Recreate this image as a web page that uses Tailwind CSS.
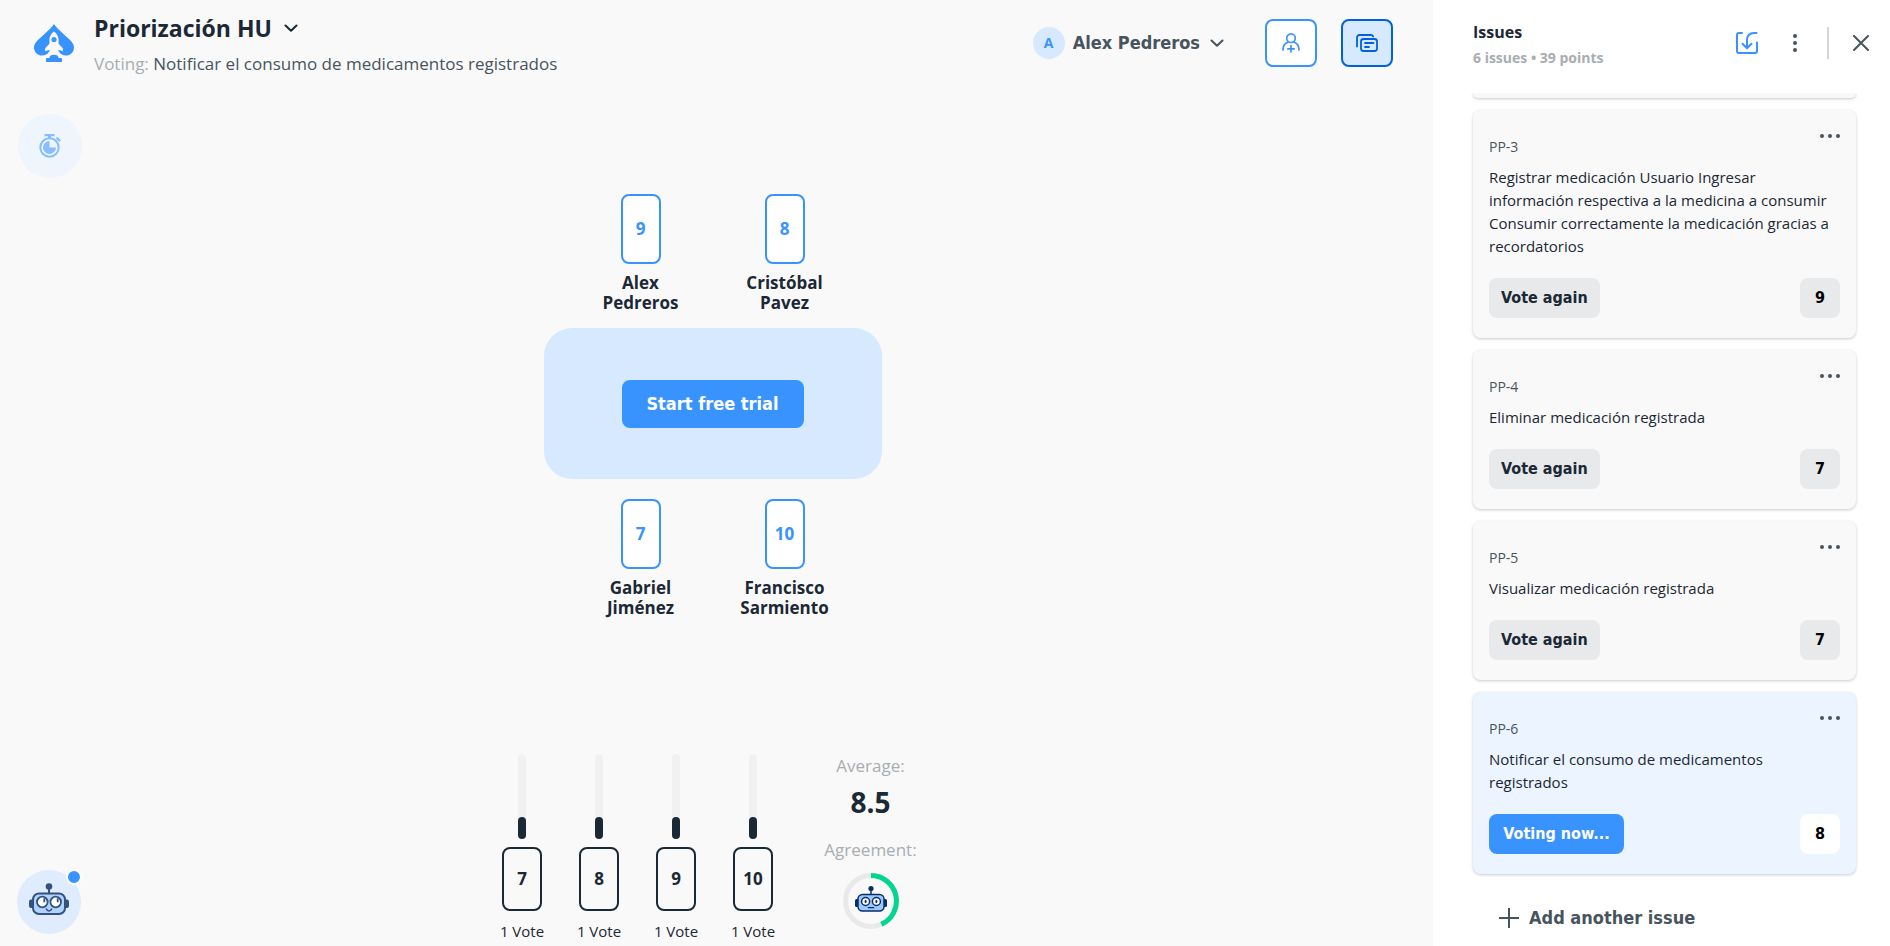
<!DOCTYPE html>
<html lang="es">
<head>
<meta charset="utf-8">
<meta name="viewport" content="width=device-width, initial-scale=1">
<title>Priorización HU</title>
<script src="https://cdn.jsdelivr.net/npm/@tailwindcss/browser@4"></script>
</head>
<body class="relative flex h-screen overflow-hidden bg-[#f9f9f9] font-['Open_Sans','Noto_Sans',sans-serif] text-[#1b2835]">

<svg class="hidden" aria-hidden="true">
  <symbol id="chevron" viewBox="0 0 14 8"><path d="M1.5 1.5 7 6.8l5.500-5.300" fill="none" stroke="currentColor" stroke-width="2" stroke-linecap="round" stroke-linejoin="round"/></symbol>
  <symbol id="dots" viewBox="0 0 20 4"><circle cx="2" cy="2" r="2"/><circle cx="10" cy="2" r="2"/><circle cx="18" cy="2" r="2"/></symbol>
</svg>

<main class="flex min-w-0 flex-1 flex-col">
  <header class="flex h-[86px] shrink-0 items-start pl-[34px] pr-10">
    <a href="#" aria-label="Inicio" class="mt-6 block">
      <svg class="h-[38px] w-10" viewBox="0 0 40 38">
        <path d="M20 0C17.500 4 12 8.500 7 13.200 3 16.800 0 19.600 0 23.400 0 28.200 3.800 31.500 8 31.500c3 0 5.600-1.200 7.200-3.500l4.800 2 4.800-2c1.600 2.300 4.200 3.500 7.200 3.500 4.200 0 8-3.300 8-8.100 0-3.800-3-6.600-7-10.200C28 8.500 22.500 4 20 0Z" fill="#3993ff"/>
        <path d="M20 7.500c-3.200 2.300-4.600 5.200-4.600 8.600v3.600l-3.800 4c-.7.800-.7 2.100-.3 3.500l2.600-.9 2.100-.1L13 31h14l-3-4.800 2.100.1 2.600.9c.4-1.400.4-2.700-.3-3.500l-3.800-4v-3.600c0-3.400-1.400-6.300-4.600-8.600Z" fill="#f9f9f9"/>
        <path d="M12.500 31 16 29h8l3.500 2v2.800h-15Z" fill="#f9f9f9"/>
        <circle cx="20" cy="15.500" r="2.600" fill="#3993ff"/>
        <path d="M15.500 34c0-2 1.500-3.200 4.500-3.200s4.500 1.200 4.500 3.200H27c.7 0 1 .6 1 1.400V38H12v-2.600c0-.8.3-1.400 1-1.400Z" fill="#3993ff"/>
      </svg>
    </a>
    <div class="ml-5 min-w-0">
      <button type="button" class="mt-3 flex h-8 items-center gap-3 text-[23px] font-bold">Priorización HU
        <svg class="h-2 w-3.5"><use href="#chevron"/></svg>
      </button>
      <p class="mt-2 truncate text-[17px] leading-6 text-[#48545d]"><span class="text-[#a8adb1]">Voting:</span> Notificar el consumo de medicamentos registrados</p>
    </div>
    <div class="ml-auto mt-[19px] flex shrink-0 items-center">
      <button type="button" class="mr-[41px] flex h-12 items-center text-[#48545d]">
        <span class="flex size-8 items-center justify-center rounded-full bg-[#d7e9ff] text-sm font-bold text-[#3993ff]">A</span>
        <span class="ml-2 font-['DejaVu_Sans_Condensed','Open_Sans',sans-serif] text-lg font-bold">Alex Pedreros</span>
        <svg class="ml-2.5 h-2 w-3.5"><use href="#chevron"/></svg>
      </button>
      <button type="button" aria-label="Invitar jugadores" class="flex h-12 w-[52px] items-center justify-center rounded-lg border-2 border-[#3993ff] bg-white text-[#3993ff]">
        <svg class="h-5 w-[18px]" viewBox="0 0 18 20" fill="none" stroke="currentColor" stroke-width="1.700" stroke-linecap="round"><circle cx="9" cy="5.200" r="4.300"/><path d="M1 17c0-3.800 1.800-6.600 4.800-7.700M17 17c0-3.800-1.800-6.600-4.800-7.700M9 12.500V19M5.800 15.800h6.400"/></svg>
      </button>
      <button type="button" aria-label="Issues" class="ml-6 flex h-12 w-[52px] items-center justify-center rounded-lg border-2 border-[#0060df] bg-[#d7e9ff] text-[#0060df]">
        <svg class="h-[18px] w-[22px]" viewBox="0 0 22 18" fill="none" stroke="currentColor" stroke-width="1.800" stroke-linecap="round" stroke-linejoin="round"><rect x="5" y="5" width="16" height="12" rx="2.500"/><path d="M1 12.500V3.500C1 2 2 1 3.500 1H15c1.200 0 1.800.5 2.200 1.500M9 9h8.500M9 13h4"/></svg>
      </button>
    </div>
  </header>

  <section aria-label="Mesa" class="flex flex-1 flex-col items-center justify-center pr-2">
    <ul class="flex">
      <li class="mx-6 flex w-24 flex-col items-center text-center">
        <span class="flex h-[70px] w-10 items-center justify-center rounded-lg border-2 border-[#3993ff] bg-white text-[17px] font-bold text-[#3993ff]">9</span>
        <span class="mt-[9px] text-[17px] font-bold leading-5">Alex Pedreros</span>
      </li>
      <li class="mx-6 flex w-24 flex-col items-center text-center">
        <span class="flex h-[70px] w-10 items-center justify-center rounded-lg border-2 border-[#3993ff] bg-white text-[17px] font-bold text-[#3993ff]">8</span>
        <span class="mt-[9px] text-[17px] font-bold leading-5">Cristóbal Pavez</span>
      </li>
    </ul>
    <div class="mt-[15px] flex h-[151px] w-[338px] items-center justify-center rounded-[28px] bg-[#d7e9ff]">
      <button type="button" class="h-12 w-[182px] rounded-lg bg-[#3993ff] font-['DejaVu_Sans_Condensed','Open_Sans',sans-serif] text-lg font-bold text-white">Start free trial</button>
    </div>
    <ul class="mt-5 flex">
      <li class="mx-6 flex w-24 flex-col items-center text-center">
        <span class="flex h-[70px] w-10 items-center justify-center rounded-lg border-2 border-[#3993ff] bg-white text-[17px] font-bold text-[#3993ff]">7</span>
        <span class="mt-[9px] text-[17px] font-bold leading-5">Gabriel Jiménez</span>
      </li>
      <li class="mx-6 flex w-24 flex-col items-center text-center">
        <span class="flex h-[70px] w-10 items-center justify-center rounded-lg border-2 border-[#3993ff] bg-white text-[17px] font-bold text-[#3993ff]">10</span>
        <span class="mt-[9px] text-[17px] font-bold leading-5">Francisco Sarmiento</span>
      </li>
    </ul>
  </section>

  <section aria-label="Resultados" class="flex h-[220px] shrink-0 justify-center pr-3">
    <ul class="mt-7 flex">
      <li class="flex w-[77px] flex-col items-center">
        <span class="flex h-[85px] w-2 items-end rounded-full bg-[#f1f1f1]"><span class="h-[22px] w-2 rounded-full bg-[#1b2835]"></span></span>
        <span class="mt-2 flex h-16 w-10 items-center justify-center rounded-lg border-2 border-[#1b2835] text-[17px] font-bold">7</span>
        <span class="mt-2.5 text-[15px] leading-5">1 Vote</span>
      </li>
      <li class="flex w-[77px] flex-col items-center">
        <span class="flex h-[85px] w-2 items-end rounded-full bg-[#f1f1f1]"><span class="h-[22px] w-2 rounded-full bg-[#1b2835]"></span></span>
        <span class="mt-2 flex h-16 w-10 items-center justify-center rounded-lg border-2 border-[#1b2835] text-[17px] font-bold">8</span>
        <span class="mt-2.5 text-[15px] leading-5">1 Vote</span>
      </li>
      <li class="flex w-[77px] flex-col items-center">
        <span class="flex h-[85px] w-2 items-end rounded-full bg-[#f1f1f1]"><span class="h-[22px] w-2 rounded-full bg-[#1b2835]"></span></span>
        <span class="mt-2 flex h-16 w-10 items-center justify-center rounded-lg border-2 border-[#1b2835] text-[17px] font-bold">9</span>
        <span class="mt-2.5 text-[15px] leading-5">1 Vote</span>
      </li>
      <li class="flex w-[77px] flex-col items-center">
        <span class="flex h-[85px] w-2 items-end rounded-full bg-[#f1f1f1]"><span class="h-[22px] w-2 rounded-full bg-[#1b2835]"></span></span>
        <span class="mt-2 flex h-16 w-10 items-center justify-center rounded-lg border-2 border-[#1b2835] text-[17px] font-bold">10</span>
        <span class="mt-2.5 text-[15px] leading-5">1 Vote</span>
      </li>
    </ul>
    <div class="ml-3 mt-7 flex w-[134px] flex-col items-center text-[17px] leading-6 text-[#a8adb1]">
      <span>Average:</span>
      <strong class="mt-1.5 text-[28px] font-bold leading-9 text-[#1b2835]">8.5</strong>
      <span class="mt-[18px]">Agreement:</span>
      <svg class="mt-[11px] size-14" viewBox="0 0 56 56" role="img" aria-label="Acuerdo 44%">
        <circle cx="28" cy="28" r="25.500" fill="none" stroke="#e8e9ea" stroke-width="5"/>
        <path d="M28 2.500a25.500 25.500 0 0 1 10.300 48.800" fill="none" stroke="#00d68f" stroke-width="5"/>
        <path d="M28 16v6" stroke="#0a2f66" stroke-width="1.500"/>
        <circle cx="28" cy="15.500" r="2.600" fill="#0a2f66"/>
        <rect x="12" y="26" width="4" height="8" rx="1.500" fill="#0a2f66"/><rect x="40" y="26" width="4" height="8" rx="1.500" fill="#0a2f66"/>
        <rect x="15" y="21.500" width="26" height="16.500" rx="4.500" fill="#9cc9ff" stroke="#0a2f66" stroke-width="1.500"/>
        <circle cx="22.600" cy="28.500" r="4" fill="#fff" stroke="#0a2f66" stroke-width="1.500"/><circle cx="33.400" cy="28.500" r="4" fill="#fff" stroke="#0a2f66" stroke-width="1.500"/>
        <ellipse cx="22.600" cy="28.500" rx="1" ry="1.700" fill="#0a2f66"/><ellipse cx="33.400" cy="28.500" rx="1" ry="1.700" fill="#0a2f66"/>
        <path d="M25.300 34.700h5.400" stroke="#0a2f66" stroke-width="1.300" stroke-linecap="round"/>
      </svg>
    </div>
  </section>
</main>

<aside aria-label="Issues" class="flex w-[457px] shrink-0 flex-col bg-white">
  <header class="flex h-[93px] shrink-0 pl-10 pr-[21px]">
    <div>
      <h2 class="mt-5 text-base font-bold leading-6">Issues</h2>
      <p class="mt-1 text-sm font-bold leading-5 text-[#a8adb1]">6 issues • 39 points</p>
    </div>
    <div class="ml-auto mt-[27px] flex h-8 items-center text-[#48545d]">
      <button type="button" aria-label="Importar issues" class="text-[#3993ff]">
        <svg class="size-[22px]" viewBox="0 0 22 22" fill="none" stroke="currentColor" stroke-width="2" stroke-linecap="round" stroke-linejoin="round"><path d="M6 1H3C1.800 1 1 1.800 1 3v16c0 1.200.8 2 2 2h16c1.200 0 2-.8 2-2v-8.500M20.500 1H18c-4.500 0-7 3-7 7.500V16M6.500 11.800 11 16.300l4.500-4.500"/></svg>
      </button>
      <button type="button" aria-label="Más opciones" class="ml-[35px]">
        <svg class="h-[18px] w-1" viewBox="0 0 4 18" fill="currentColor"><circle cx="2" cy="2" r="2"/><circle cx="2" cy="9" r="2"/><circle cx="2" cy="16" r="2"/></svg>
      </button>
      <span class="ml-[30px] h-8 w-0.5 bg-[#d3d6d8]"></span>
      <button type="button" aria-label="Cerrar" class="ml-6">
        <svg class="size-4" viewBox="0 0 16 16" fill="none" stroke="currentColor" stroke-width="2" stroke-linecap="round"><path d="m1 1 14 14M15 1 1 15"/></svg>
      </button>
    </div>
  </header>

  <div class="flex min-h-0 flex-1 flex-col gap-3 overflow-hidden pl-10 pr-[34px]">
    <div class="h-[5px] shrink-0 rounded-b-lg bg-[#f9f9f9] shadow-[0_1px_3px_rgba(27,40,53,0.250)]"></div>

    <article class="shrink-0 rounded-lg bg-[#f9f9f9] px-4 pb-5 shadow-[0_1px_3px_rgba(27,40,53,0.250)]">
      <div class="flex items-start justify-between pt-6">
        <span class="mt-[3px] text-[14px] leading-5 text-[#48545d]">PP-3</span>
        <button type="button" aria-label="Opciones de PP-3" class="h-1 text-[#48545d]"><svg class="h-1 w-5" fill="currentColor"><use href="#dots"/></svg></button>
      </div>
      <p class="mt-[9px] text-[15px] leading-[23px]">Registrar medicación Usuario Ingresar información respectiva a la medicina a consumir Consumir correctamente la medicación gracias a recordatorios</p>
      <div class="mt-5 flex justify-between font-['DejaVu_Sans_Condensed','Open_Sans',sans-serif] text-base font-bold">
        <button type="button" class="h-10 rounded-lg bg-[#e8e9ea] px-3">Vote again</button>
        <button type="button" class="size-10 rounded-lg bg-[#e8e9ea] text-black">9</button>
      </div>
    </article>

    <article class="shrink-0 rounded-lg bg-[#f9f9f9] px-4 pb-5 shadow-[0_1px_3px_rgba(27,40,53,0.250)]">
      <div class="flex items-start justify-between pt-6">
        <span class="mt-[3px] text-[14px] leading-5 text-[#48545d]">PP-4</span>
        <button type="button" aria-label="Opciones de PP-4" class="h-1 text-[#48545d]"><svg class="h-1 w-5" fill="currentColor"><use href="#dots"/></svg></button>
      </div>
      <p class="mt-[9px] text-[15px] leading-[23px]">Eliminar medicación registrada</p>
      <div class="mt-5 flex justify-between font-['DejaVu_Sans_Condensed','Open_Sans',sans-serif] text-base font-bold">
        <button type="button" class="h-10 rounded-lg bg-[#e8e9ea] px-3">Vote again</button>
        <button type="button" class="size-10 rounded-lg bg-[#e8e9ea] text-black">7</button>
      </div>
    </article>

    <article class="shrink-0 rounded-lg bg-[#f9f9f9] px-4 pb-5 shadow-[0_1px_3px_rgba(27,40,53,0.250)]">
      <div class="flex items-start justify-between pt-6">
        <span class="mt-[3px] text-[14px] leading-5 text-[#48545d]">PP-5</span>
        <button type="button" aria-label="Opciones de PP-5" class="h-1 text-[#48545d]"><svg class="h-1 w-5" fill="currentColor"><use href="#dots"/></svg></button>
      </div>
      <p class="mt-[9px] text-[15px] leading-[23px]">Visualizar medicación registrada</p>
      <div class="mt-5 flex justify-between font-['DejaVu_Sans_Condensed','Open_Sans',sans-serif] text-base font-bold">
        <button type="button" class="h-10 rounded-lg bg-[#e8e9ea] px-3">Vote again</button>
        <button type="button" class="size-10 rounded-lg bg-[#e8e9ea] text-black">7</button>
      </div>
    </article>

    <article class="shrink-0 rounded-lg bg-[#ebf4ff] px-4 pb-5 shadow-[0_1px_3px_rgba(27,40,53,0.250)]">
      <div class="flex items-start justify-between pt-6">
        <span class="mt-[3px] text-[14px] leading-5 text-[#48545d]">PP-6</span>
        <button type="button" aria-label="Opciones de PP-6" class="h-1 text-[#48545d]"><svg class="h-1 w-5" fill="currentColor"><use href="#dots"/></svg></button>
      </div>
      <p class="mt-[9px] text-[15px] leading-[23px]">Notificar el consumo de medicamentos registrados</p>
      <div class="mt-5 flex justify-between font-['DejaVu_Sans_Condensed','Open_Sans',sans-serif] text-base font-bold">
        <button type="button" class="h-10 w-[135px] rounded-lg bg-[#3993ff] text-white">Voting now...</button>
        <button type="button" class="size-10 rounded-lg bg-white text-black">8</button>
      </div>
    </article>

    <button type="button" class="ml-[26px] mt-2 flex h-12 shrink-0 items-center gap-2.5 self-start font-['DejaVu_Sans_Condensed','Open_Sans',sans-serif] text-lg font-bold text-[#48545d]">
      <svg class="size-5" viewBox="0 0 20 20" stroke="currentColor" stroke-width="2"><path d="M10 0v20M0 10h20"/></svg>
      Add another issue
    </button>
  </div>
</aside>

<button type="button" aria-label="Temporizador" class="absolute left-[18px] top-[114px] flex size-16 items-center justify-center rounded-full bg-[#eff5fd] text-[#88bdff]">
  <svg class="h-6 w-[22px]" viewBox="0 0 22 24"><path d="M5.500 0h10v2.200H12v2H9v-2H5.500Z" fill="currentColor"/><circle cx="10.500" cy="13.500" r="9.200" fill="none" stroke="currentColor" stroke-width="2"/><path d="M10.500 13.500V7a6.500 6.500 0 1 0 6.500 6.500Z" fill="currentColor"/><path d="m17.500 3.500 3.500 3.700" stroke="currentColor" stroke-width="2.500"/></svg>
</button>

<button type="button" aria-label="Asistente" class="absolute bottom-3 left-[17px] flex size-16 items-center justify-center rounded-full bg-[#dfecfd]">
  <svg class="-mt-1.5 h-8 w-10" viewBox="0 0 40 32">
    <path d="M20 3v8" stroke="#33527f" stroke-width="2"/><circle cx="20" cy="3.500" r="3.300" fill="#33527f"/>
    <rect x="0" y="16.500" width="6" height="8.500" rx="2" fill="#33527f"/><rect x="34" y="16.500" width="6" height="8.500" rx="2" fill="#33527f"/>
    <rect x="4" y="10.500" width="32" height="20.500" rx="6" fill="#b0d3ff" stroke="#33527f" stroke-width="2"/>
    <circle cx="13.300" cy="19" r="5.300" fill="#fff" stroke="#33527f" stroke-width="1.800"/><circle cx="26.700" cy="19" r="5.300" fill="#fff" stroke="#33527f" stroke-width="1.800"/>
    <path d="M15.300 15.300v3.900M28.700 15.300v3.900" stroke="#33527f" stroke-width="1.800"/>
    <path d="M17.300 26c.6 1.300 1.600 1.900 2.700 1.900s2.100-.6 2.700-1.900" fill="none" stroke="#33527f" stroke-width="1.500" stroke-linecap="round"/>
  </svg>
  <span class="absolute -right-px -top-px size-4 rounded-full border-2 border-white bg-[#3993ff]"></span>
</button>
</body>
</html>
